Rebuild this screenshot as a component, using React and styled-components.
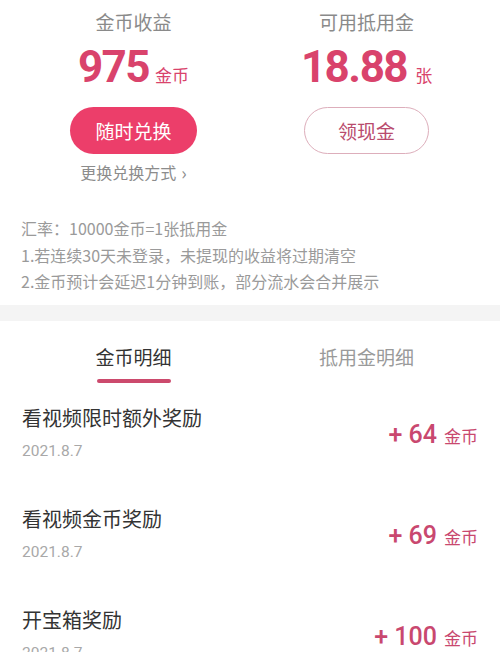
import React from "react";
import styled, { createGlobalStyle } from "styled-components";

const GlobalStyle = createGlobalStyle`
  html, body {
    margin: 0;
    padding: 0;
    background: #fff;
  }
  body {
    font-family: "Noto Sans CJK SC", "Noto Sans", sans-serif;
  }
`;

const Page = styled.div`
  width: 500px;
  background: #fff;
  overflow: hidden;
`;

const Summary = styled.section`
  display: grid;
  grid-template-columns: 1fr 1fr;
  padding: 10px 17px 0;
`;

const Column = styled.div`
  display: flex;
  flex-direction: column;
  align-items: center;
`;

const Label = styled.div`
  font-size: 19px;
  line-height: 24px;
  color: #8a8a8a;
`;

const Amount = styled.div`
  display: flex;
  align-items: baseline;
  margin-top: 8px;
  height: 50px;
  color: #d9436c;
`;

const BigNumber = styled.span`
  font-family: Roboto, "Noto Sans", sans-serif;
  font-weight: 700;
  font-size: 44px;
  line-height: 50px;
  letter-spacing: -1.5px;
`;

const Unit = styled.span`
  font-size: 17px;
  margin-left: ${(p) => p.$gap || 6}px;
`;

const PillButton = styled.button`
  margin-top: 15px;
  width: ${(p) => p.$width}px;
  height: 47px;
  border-radius: 24px;
  font-family: "Noto Sans CJK SC", sans-serif;
  font-size: 19px;
  cursor: pointer;
  border: ${(p) => (p.$primary ? "none" : "1.5px solid #ddaebb")};
  background: ${(p) => (p.$primary ? "#ec3e6a" : "#fff")};
  color: ${(p) => (p.$primary ? "#fff" : "#b94b6d")};
`;

const SwitchLink = styled.div`
  margin-top: 7px;
  font-size: 16px;
  line-height: 22px;
  color: #8c8c8c;
  display: flex;
  align-items: center;
  gap: 5px;
`;

const Chevron = styled.span`
  font-size: 18px;
  line-height: 22px;
`;

const Notes = styled.section`
  padding: 32px 21px 10px;
`;

const Note = styled.div`
  font-size: 16px;
  line-height: 26.5px;
  color: #9a9a9a;
`;

const Divider = styled.div`
  height: 16px;
  background: #f4f4f4;
`;

const Tabs = styled.div`
  display: grid;
  grid-template-columns: 1fr 1fr;
  padding: 24px 17px 0;
`;

const Tab = styled.div`
  display: flex;
  flex-direction: column;
  align-items: center;
  font-size: 19px;
  line-height: 24px;
  color: ${(p) => (p.$active ? "#333" : "#9a9a9a")};
`;

const TabBar = styled.div`
  margin-top: 10px;
  width: 74px;
  height: 4px;
  border-radius: 2px;
  background: ${(p) => (p.$active ? "#cc4a6d" : "transparent")};
`;

const List = styled.div`
  display: flex;
  flex-direction: column;
`;

const Row = styled.div`
  display: flex;
  align-items: center;
  justify-content: space-between;
  padding: 22px 22px;
`;

const RowText = styled.div`
  display: flex;
  flex-direction: column;
`;

const Title = styled.div`
  font-size: 20px;
  line-height: 26px;
  color: #333;
`;

const DateText = styled.div`
  margin-top: 9px;
  font-family: Roboto, "Noto Sans", sans-serif;
  font-size: 15.5px;
  line-height: 22px;
  color: #a8a8a8;
`;

const Reward = styled.div`
  display: flex;
  align-items: baseline;
  color: #c9486f;
  padding-top: 2px;
`;

const RewardNumber = styled.span`
  font-family: Roboto, "Noto Sans", sans-serif;
  font-weight: 500;
  font-size: 25px;
`;

const RewardUnit = styled.span`
  font-size: 17px;
  margin-left: 7px;
`;

const records = [
  { title: "看视频限时额外奖励", date: "2021.8.7", amount: 64 },
  { title: "看视频金币奖励", date: "2021.8.7", amount: 69 },
  { title: "开宝箱奖励", date: "2021.8.7", amount: 100 },
];

const App = () => {
  return (
    <Page>
      <GlobalStyle />
      <Summary>
        <Column>
          <Label>金币收益</Label>
          <Amount>
            <BigNumber>975</BigNumber>
            <Unit>金币</Unit>
          </Amount>
          <PillButton $primary $width={127}>
            随时兑换
          </PillButton>
          <SwitchLink>
            更换兑换方式<Chevron>›</Chevron>
          </SwitchLink>
        </Column>
        <Column>
          <Label>可用抵用金</Label>
          <Amount>
            <BigNumber>18.88</BigNumber>
            <Unit $gap={8}>张</Unit>
          </Amount>
          <PillButton $width={125}>领现金</PillButton>
        </Column>
      </Summary>
      <Notes>
        <Note>汇率：10000金币=1张抵用金</Note>
        <Note>1.若连续30天未登录，未提现的收益将过期清空</Note>
        <Note>2.金币预计会延迟1分钟到账，部分流水会合并展示</Note>
      </Notes>
      <Divider />
      <Tabs>
        <Tab $active>
          金币明细
          <TabBar $active />
        </Tab>
        <Tab>
          抵用金明细
          <TabBar />
        </Tab>
      </Tabs>
      <List>
        {records.map((r) => (
          <Row key={r.title}>
            <RowText>
              <Title>{r.title}</Title>
              <DateText>{r.date}</DateText>
            </RowText>
            <Reward>
              <RewardNumber>+ {r.amount}</RewardNumber>
              <RewardUnit>金币</RewardUnit>
            </Reward>
          </Row>
        ))}
      </List>
    </Page>
  );
};

export default App;
